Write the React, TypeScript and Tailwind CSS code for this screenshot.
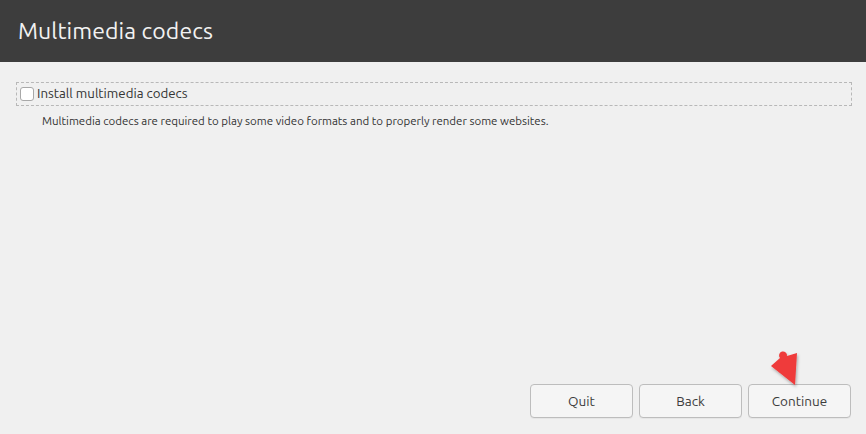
const font = "font-['Ubuntu','Noto_Sans','DejaVu_Sans',sans-serif]";

function Button({ label }: { label: string }) {
  return (
    <button className="w-[103px] h-[34px] rounded-[4px] border border-[#bdbdbd] bg-[#f5f5f5] text-[13.5px] text-[#3c3c3c] shadow-[0_1px_0_rgba(0,0,0,0.04)]">
      {label}
    </button>
  );
}

export default function App() {
  return (
    <div className={`w-[866px] h-[434px] flex flex-col bg-[#f0f0f0] ${font}`}>
      {/* Header */}
      <div className="h-[62px] shrink-0 bg-[#3d3d3d] flex items-center px-[18px]">
        <h1 className="text-[23px] text-[#f2f2f2] tracking-[0.1px]">Multimedia codecs</h1>
      </div>

      {/* Content */}
      <div className="flex-1 flex flex-col pt-[20px] px-[16px]">
        <label className="h-[24px] w-[836px] flex items-center gap-[3px] border border-dashed border-[#b8b8b8] pl-[3px]">
          <span className="w-[14px] h-[14px] rounded-[3px] border border-[#a8a8a8] bg-white" />
          <span className="text-[13.3px] text-[#333333]">Install multimedia codecs</span>
        </label>
        <p className="mt-[6px] ml-[26px] text-[11.5px] text-[#333333]">
          Multimedia codecs are required to play some video formats and to properly render some websites.
        </p>
      </div>

      {/* Footer buttons */}
      <div className="relative flex justify-end gap-[6px] pr-[15px] pb-[16px]">
        <Button label="Quit" />
        <Button label="Back" />
        <Button label="Continue" />
        <svg
          className="absolute left-[766px] top-[-36px]"
          width="40"
          height="42"
          viewBox="0 0 40 42"
        >
          <defs>
            <filter id="sh" x="-30%" y="-30%" width="160%" height="160%">
              <feDropShadow dx="1" dy="2" stdDeviation="1.5" floodColor="#000" floodOpacity="0.3" />
            </filter>
          </defs>
          <path
            d="M5 18 L14 10 A4 4 0 1 1 21 8 L31 5 L29 37 Z"
            fill="#ef3b3b"
            filter="url(#sh)"
          />
        </svg>
      </div>
    </div>
  );
}
